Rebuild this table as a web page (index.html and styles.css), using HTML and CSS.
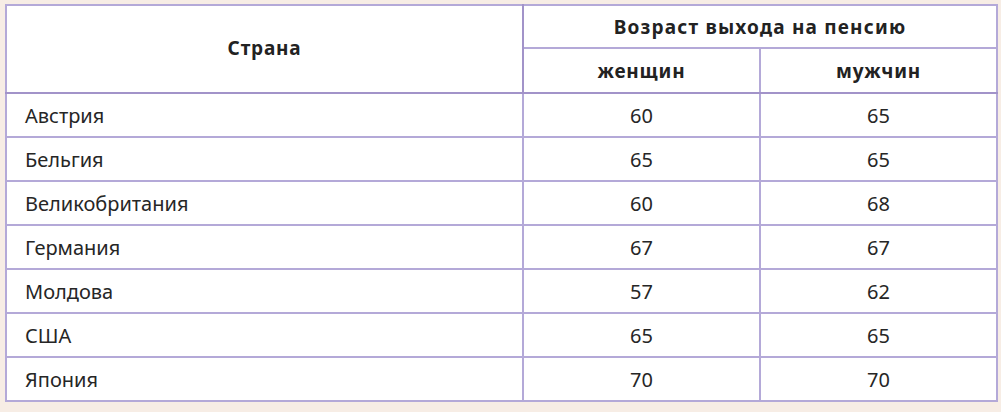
FILE: index.html
```html
<!DOCTYPE html>
<html lang="ru">
<head>
<meta charset="utf-8">
<title>Возраст выхода на пенсию</title>
<link rel="stylesheet" href="styles.css">
</head>
<body>
<div class="page">
  <table class="pension">
    <colgroup>
      <col class="c-country">
      <col class="c-num">
      <col class="c-num">
    </colgroup>
    <thead>
      <tr class="h1">
        <th rowspan="2" class="country-head">Страна</th>
        <th colspan="2" class="group-head">Возраст выхода на пенсию</th>
      </tr>
      <tr class="h2">
        <th>женщин</th>
        <th>мужчин</th>
      </tr>
    </thead>
    <tbody>
      <tr><td class="country">Австрия</td><td>60</td><td>65</td></tr>
      <tr><td class="country">Бельгия</td><td>65</td><td>65</td></tr>
      <tr><td class="country">Великобритания</td><td>60</td><td>68</td></tr>
      <tr><td class="country">Германия</td><td>67</td><td>67</td></tr>
      <tr><td class="country">Молдова</td><td>57</td><td>62</td></tr>
      <tr><td class="country">США</td><td>65</td><td>65</td></tr>
      <tr><td class="country">Япония</td><td>70</td><td>70</td></tr>
    </tbody>
  </table>
</div>
</body>
</html>
```

FILE: styles.css
```css
html, body {
  margin: 0;
  padding: 0;
  background: #f7ede5;
}

.page {
  padding: 4px 5px 0 5px;
}

.pension {
  width: 991px;
  border-collapse: collapse;
  background: #ffffff;
  border: 2px solid #9d8ec6;
  font-family: "Noto Sans", "Open Sans", sans-serif;
  color: #262626;
  table-layout: fixed;
}

.c-country { width: 517px; }
.c-num { width: 237px; }

.pension th,
.pension td {
  border: 2px solid #b4a9d8;
  padding: 0;
  text-align: center;
  vertical-align: middle;
}

.pension th {
  font-weight: 700;
  font-size: 19px;
  color: #222222;
  letter-spacing: 0.8px;
}

.pension th.group-head {
  letter-spacing: 1.2px;
}

.pension th.country-head {
  border-right-color: #a293c9;
  padding-bottom: 2px;
}

.h1 th { height: 41px; }
.h2 th { height: 43px; }

.pension thead tr.h2 th,
.pension thead th.country-head {
  border-bottom-color: #a293c9;
}

.pension td {
  height: 42px;
  font-size: 20px;
  font-weight: 400;
}

.pension td.country {
  text-align: left;
  padding-left: 18px;
}
```
